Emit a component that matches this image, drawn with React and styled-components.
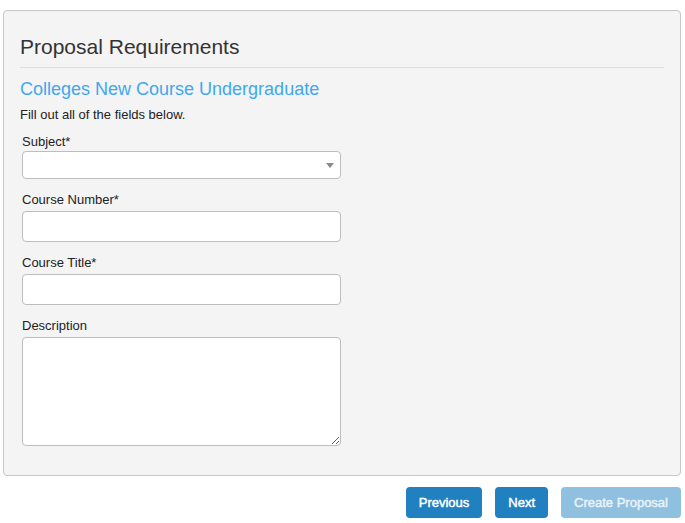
import styled, { createGlobalStyle } from "styled-components";

const fields = [
  { label: "Subject*", kind: "select" },
  { label: "Course Number*", kind: "input" },
  { label: "Course Title*", kind: "input" },
  { label: "Description", kind: "textarea" },
];

export default function App() {
  return (
    <Page>
      <GlobalStyle />
      <Panel>
        <Heading>Proposal Requirements</Heading>
        <Subtitle>Colleges New Course Undergraduate</Subtitle>
        <Hint>Fill out all of the fields below.</Hint>
        <Form>
          {fields.map((f) => (
            <Group key={f.label}>
              <Label $tight={f.kind === "select"}>{f.label}</Label>
              {f.kind === "select" && (
                <SelectBox>
                  <Select defaultValue="">
                    <option value=""></option>
                  </Select>
                  <Caret />
                </SelectBox>
              )}
              {f.kind === "input" && <Input type="text" />}
              {f.kind === "textarea" && <TextArea />}
            </Group>
          ))}
        </Form>
      </Panel>
      <Actions>
        <Button>Previous</Button>
        <Button>Next</Button>
        <Button disabled>Create Proposal</Button>
      </Actions>
    </Page>
  );
}

const GlobalStyle = createGlobalStyle`
  body {
    margin: 0;
    background: #fff;
    font-family: "Liberation Sans", Arial, sans-serif;
    color: #333;
  }
`;

const Page = styled.div`
  padding: 10px 4px 0 3px;
`;

const Panel = styled.div`
  background: #f4f4f4;
  border: 1px solid #c8c8c8;
  border-radius: 4px;
  padding: 24px 16px 17px;
`;

const Heading = styled.h3`
  margin: 0;
  font-size: 21px;
  font-weight: normal;
  line-height: 24px;
  color: #333;
  padding-bottom: 8px;
  border-bottom: 1px solid #dedede;
`;

const Subtitle = styled.h4`
  margin: 10px 0 0;
  font-size: 18px;
  font-weight: normal;
  line-height: 22px;
  color: #3fa8ef;
`;

const Hint = styled.p`
  margin: 6px 0 0;
  font-size: 13px;
  line-height: 17px;
  color: #222;
`;

const Form = styled.div`
  margin: 10px 0 0 2px;
  width: 319px;
`;

const Group = styled.div`
  display: flex;
  flex-direction: column;
  margin-bottom: 12px;
`;

const Label = styled.label`
  font-size: 13px;
  line-height: 17px;
  color: #222;
  margin-bottom: ${(p) => (p.$tight ? "1px" : "3px")};
`;

const fieldBase = `
  box-sizing: border-box;
  width: 100%;
  background: #fff;
  border: 1px solid #bdbdbd;
  border-radius: 4px;
  font-family: "Liberation Sans", Arial, sans-serif;
  font-size: 13px;
  outline: none;
`;

const SelectBox = styled.div`
  position: relative;
`;

const Select = styled.select`
  ${fieldBase}
  display: block;
  height: 28px;
  appearance: none;
  padding: 0 8px;
`;

const Caret = styled.span`
  position: absolute;
  right: 7px;
  top: 12px;
  width: 0;
  height: 0;
  border-left: 4px solid transparent;
  border-right: 4px solid transparent;
  border-top: 5px solid #888;
  pointer-events: none;
`;

const Input = styled.input`
  ${fieldBase}
  display: block;
  height: 31px;
  padding: 0 8px;
`;

const TextArea = styled.textarea`
  ${fieldBase}
  display: block;
  height: 109px;
  padding: 6px 8px;
  resize: vertical;
`;

const Actions = styled.div`
  display: flex;
  justify-content: flex-end;
  gap: 13px;
  margin-top: 11px;
`;

const Button = styled.button`
  height: 31px;
  padding: 0 13px;
  border: none;
  border-radius: 4px;
  background: #2080c0;
  color: #fff;
  font-family: "Liberation Sans", Arial, sans-serif;
  font-size: 13px;
  -webkit-text-stroke: 0.45px currentColor;
  cursor: pointer;

  &:disabled {
    background: #8fc0e0;
    color: #eaf3f9;
    cursor: default;
  }
`;
